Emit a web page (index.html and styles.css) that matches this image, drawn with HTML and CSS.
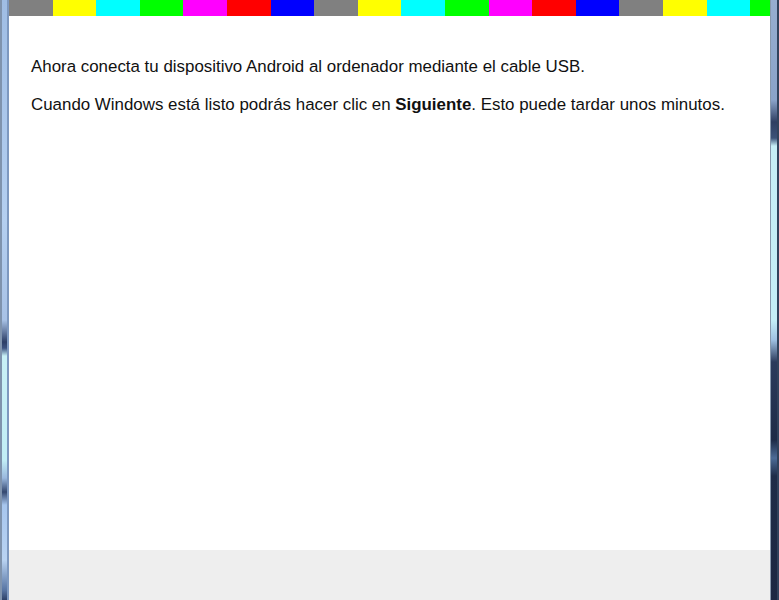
FILE: index.html
```html
<!DOCTYPE html>
<html>
<head>
    <title>Conectar dispositivo</title>
    <link rel="stylesheet" href="styles.css">
</head>
<body>
    <div class="window">
        <div class="frame frame-left"></div>
        <div class="client">
            <div class="color-bars">
                <span class="bar gray"></span>
                <span class="bar yellow"></span>
                <span class="bar cyan"></span>
                <span class="bar green"></span>
                <span class="bar magenta"></span>
                <span class="bar red"></span>
                <span class="bar blue"></span>
                <span class="bar gray"></span>
                <span class="bar yellow"></span>
                <span class="bar cyan"></span>
                <span class="bar green"></span>
                <span class="bar magenta"></span>
                <span class="bar red"></span>
                <span class="bar blue"></span>
                <span class="bar gray"></span>
                <span class="bar yellow"></span>
                <span class="bar cyan"></span>
                <span class="bar green half"></span>
            </div>
            <div class="content">
                <p>Ahora conecta tu dispositivo Android al ordenador mediante el cable USB.</p>
                <p>Cuando Windows está listo podrás hacer clic en <b>Siguiente</b>. Esto puede tardar unos minutos.</p>
            </div>
            <div class="footer"></div>
        </div>
        <div class="frame frame-right"></div>
    </div>
</body>
</html>
```

FILE: styles.css
```css
body {
    margin: 0;
    padding: 0;
    font-family: 'Liberation Sans', Arial, sans-serif;
    background: #fff;
    overflow: hidden;
}

.window {
    display: flex;
    width: 779px;
    height: 600px;
}

/* glass window borders */
.frame {
    width: 9px;
    flex: none;
    box-sizing: border-box;
}

.frame-left {
    border-left: 2px solid #7f93ad;
    border-right: 2px solid #7d98bf;
    background: linear-gradient(to bottom,
        #9fbde4 0px,
        #b4cff0 220px,
        #a8c2e6 320px,
        #2c3e66 342px,
        #3c5280 348px,
        #c8f0f6 356px,
        #c2eef6 460px,
        #9ab8de 478px,
        #34486f 492px,
        #a7c6ee 505px,
        #b9d3f2 560px,
        #5875a3 590px,
        #2d4168 600px);
}

.frame-right {
    border-left: 1px solid #8898ac;
    border-right: 2px solid #31425c;
    background: linear-gradient(to bottom,
        #97aed0 0px,
        #8aa3c9 100px,
        #2f3f62 122px,
        #3c5278 138px,
        #c6eef6 146px,
        #c4eef7 320px,
        #9fc0e2 340px,
        #2c3b5c 362px,
        #1e2b47 440px,
        #4d6b96 458px,
        #1f2c48 476px,
        #1c2742 600px);
}

.client {
    flex: 1;
    display: flex;
    flex-direction: column;
    min-width: 0;
}

.color-bars {
    display: flex;
    height: 16px;
    flex: none;
}

.bar {
    width: 43.6px;
    flex: none;
}

.bar.half { width: 22px; }

.gray { background: #808080; }
.yellow { background: #ffff00; }
.cyan { background: #00ffff; }
.green { background: #00ff00; }
.magenta { background: #ff00ff; }
.red { background: #ff0000; }
.blue { background: #0000ff; }

.content {
    flex: 1;
    padding: 41px 0 0 22px;
    color: #111;
    font-size: 16.9px;
}

.content p {
    margin: 0 0 18px;
    line-height: 20px;
}

.content b {
    font-weight: bold;
}

.footer {
    height: 50px;
    flex: none;
    background: #eeeeee;
}
```
